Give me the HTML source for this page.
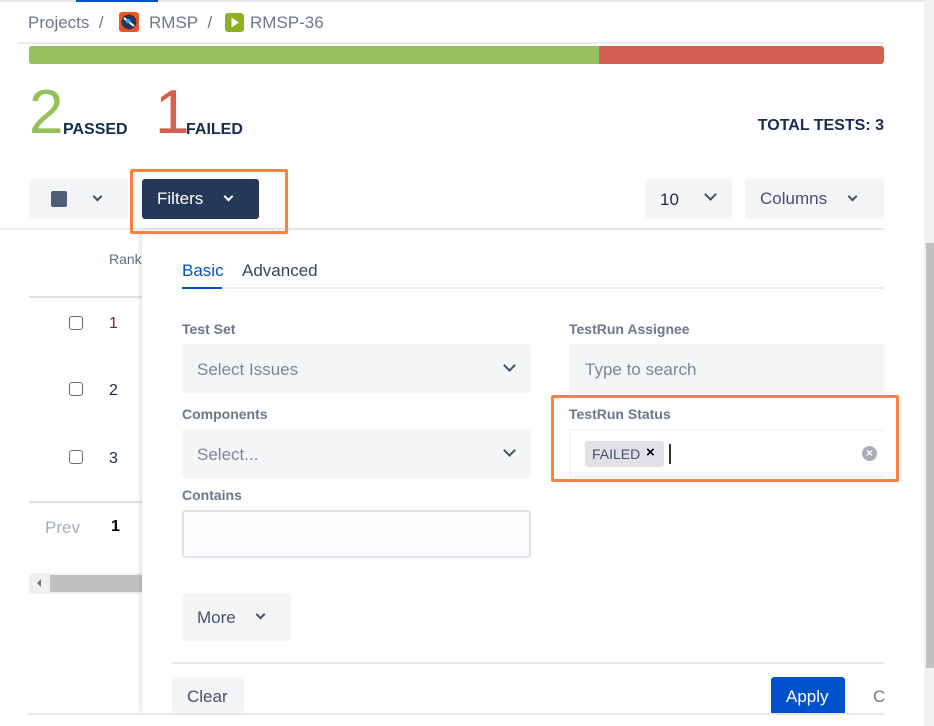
<!DOCTYPE html>
<html><head><meta charset="utf-8"><style>
*{box-sizing:border-box;margin:0;padding:0}
body{width:934px;height:726px;overflow:hidden;background:#fff;font-family:"Liberation Sans",sans-serif;position:relative;color:#172b4d}
.a{position:absolute}
.lbl{font-size:14px;font-weight:bold;color:#6b778c}
.sel{background:#f4f5f7;border-radius:3px}
.ph{font-size:17px;color:#7a869a}
.chev{position:absolute;width:9px;height:9px;border-right:2.5px solid #42526e;border-bottom:2.5px solid #42526e;transform:rotate(45deg)}
.cb{position:absolute;width:14px;height:14px;border:1.5px solid #6b6b6b;border-radius:3px;background:#fff}
.ob{z-index:5}
</style></head><body>
<div class="a" style="left:0;top:0;width:924px;height:2px;background:#e6e8ec"></div>
<div class="a" style="left:76px;top:0;width:82px;height:2px;background:#0052cc"></div>
<div class="a" style="left:924px;top:0;width:10px;height:726px;background:#f1f1f1"></div>
<div class="a" style="left:926px;top:243px;width:8px;height:425px;background:#c1c1c1"></div>

<div class="a" style="left:28px;top:13px;font-size:17px;color:#6b778c;white-space:nowrap">Projects&nbsp;&nbsp;/</div>
<svg class="a" style="left:119px;top:12px" width="20" height="20" viewBox="0 0 20 20"><rect width="20" height="20" rx="3" fill="#f4511e"/><circle cx="10" cy="10" r="7.5" fill="#253858"/><path d="M5 6 L15 14" stroke="#fff" stroke-width="2"/><circle cx="9" cy="9" r="2.2" fill="#29b6f6"/></svg>
<div class="a" style="left:149px;top:13px;font-size:17px;color:#6b778c;white-space:nowrap">RMSP&nbsp;&nbsp;/</div>
<svg class="a" style="left:225px;top:13px" width="19" height="19" viewBox="0 0 19 19"><rect width="19" height="19" rx="3" fill="#8eb021"/><path d="M6.5 4.5 L14 9.5 L6.5 14.5Z" fill="#fff"/></svg>
<div class="a" style="left:250px;top:13px;font-size:17px;color:#6b778c">RMSP-36</div>
<div class="a" style="left:18px;top:42px;width:866px;height:2px;background:#ebecf0"></div>

<div class="a" style="left:29px;top:46px;width:855px;height:18px;border-radius:3px;overflow:hidden;background:#d46050"><div style="width:570px;height:18px;background:#97c05c"></div></div>

<div class="a" style="left:29px;top:82px;font-size:62px;color:#97c05c;line-height:62px">2</div>
<div class="a" style="left:63px;top:121px;font-size:16px;font-weight:bold">PASSED</div>
<div class="a" style="left:155px;top:82px;font-size:62px;color:#d46050;line-height:62px">1</div>
<div class="a" style="left:186px;top:121px;font-size:16px;font-weight:bold">FAILED</div>
<div class="a" style="left:700px;top:117px;width:184px;text-align:right;font-size:16px;font-weight:bold">TOTAL TESTS: 3</div>

<div class="a sel" style="left:29px;top:179px;width:99px;height:40px"></div>
<div class="a" style="left:51px;top:191px;width:16px;height:16px;background:#505f79;border-radius:2px"></div>
<div class="chev" style="left:94px;top:193px;width:7px;height:7px;border-width:2px"></div>
<div class="a" style="left:142px;top:179px;width:117px;height:40px;background:#253858;border-radius:3px"></div>
<div class="a" style="left:157px;top:189px;font-size:17px;color:#fff">Filters</div>
<div class="chev" style="left:225px;top:193px;width:7px;height:7px;border-color:#fff;border-width:2px"></div>
<div class="a sel" style="left:645px;top:179px;width:87px;height:40px"></div>
<div class="a" style="left:660px;top:190px;font-size:17px">10</div>
<div class="chev" style="left:706px;top:190px"></div>
<div class="a sel" style="left:745px;top:179px;width:139px;height:40px"></div>
<div class="a" style="left:760px;top:189px;font-size:17px;color:#42526e">Columns</div>
<div class="chev" style="left:849px;top:193px;width:7px;height:7px;border-width:2px"></div>
<div class="a" style="left:0;top:228px;width:884px;height:2px;background:#ebecf0"></div>

<div class="a" style="left:109px;top:251px;font-size:14px;color:#5e6c84">Rank</div>
<div class="a" style="left:29px;top:296px;width:120px;height:2px;background:#dfe1e6"></div>
<div class="cb" style="left:69px;top:316px"></div><div class="a" style="left:109px;top:315px;font-size:16px;color:#7a1e2e">1</div>
<div class="cb" style="left:69px;top:382px"></div><div class="a" style="left:109px;top:382px;font-size:16px">2</div>
<div class="cb" style="left:69px;top:450px"></div><div class="a" style="left:109px;top:450px;font-size:16px">3</div>
<div class="a" style="left:29px;top:501px;width:120px;height:2px;background:#dfe1e6"></div>
<div class="a" style="left:45px;top:518px;font-size:17px;color:#a5adba">Prev</div>
<div class="a" style="left:111px;top:518px;font-size:16px;font-weight:bold;color:#000">1</div>
<div class="a" style="left:29px;top:573px;width:120px;height:21px;background:#f1f1f1"></div>
<div class="a" style="left:50px;top:575px;width:100px;height:17px;background:#c1c1c1"></div>
<div class="a" style="left:37px;top:579px;width:0;height:0;border-top:4px solid transparent;border-bottom:4px solid transparent;border-right:4px solid #777"></div>

<div class="a" style="left:142px;top:230px;width:742px;height:483px;background:#fff;box-shadow:-2px 0 4px rgba(9,30,66,.12)"></div>
<div class="a" style="left:182px;top:261px;font-size:17px;color:#0052cc">Basic</div>
<div class="a" style="left:242px;top:261px;font-size:17px;color:#344563">Advanced</div>
<div class="a" style="left:182px;top:287px;width:702px;height:2px;background:#ebecf0"></div>
<div class="a" style="left:182px;top:287px;width:40px;height:2px;background:#0052cc"></div>

<div class="a lbl" style="left:182px;top:321px">Test Set</div>
<div class="a sel" style="left:182px;top:344px;width:349px;height:49px"></div>
<div class="a ph" style="left:197px;top:360px">Select Issues</div>
<div class="chev" style="left:505px;top:361px"></div>

<div class="a lbl" style="left:182px;top:406px">Components</div>
<div class="a sel" style="left:182px;top:429px;width:349px;height:49px"></div>
<div class="a ph" style="left:197px;top:445px">Select...</div>
<div class="chev" style="left:505px;top:446px"></div>

<div class="a lbl" style="left:182px;top:487px">Contains</div>
<div class="a" style="left:182px;top:510px;width:349px;height:48px;background:#fafbfc;border:2px solid #dfe1e6;border-radius:3px"></div>

<div class="a sel" style="left:182px;top:593px;width:109px;height:48px"></div>
<div class="a" style="left:197px;top:608px;font-size:17px;color:#42526e">More</div>
<div class="chev" style="left:257px;top:611px;width:7px;height:7px;border-width:2px"></div>

<div class="a lbl" style="left:569px;top:321px">TestRun Assignee</div>
<div class="a sel" style="left:569px;top:344px;width:315px;height:49px"></div>
<div class="a ph" style="left:585px;top:360px">Type to search</div>

<div class="a lbl" style="left:569px;top:406px">TestRun Status</div>
<div class="a" style="left:569px;top:429px;width:315px;height:49px;border:2px solid #f4f5f7;border-right:none;border-radius:3px"></div>
<div class="a" style="left:585px;top:441px;width:79px;height:26px;background:#dfe1e6;border-radius:3px"></div>
<div class="a" style="left:592px;top:446px;font-size:14px;color:#42526e">FAILED</div>
<div class="a" style="left:646px;top:444px;font-size:15px;font-weight:bold;color:#000">×</div>
<div class="a" style="left:669px;top:444px;width:2px;height:20px;background:#333"></div>
<div class="a" style="left:862px;top:446px;width:15px;height:15px;border-radius:50%;background:#a5adba;color:#fff;font-size:12px;font-weight:bold;text-align:center;line-height:15px">×</div>

<div class="a" style="left:172px;top:662px;width:712px;height:2px;background:#e6e8ec"></div>
<div class="a sel" style="left:172px;top:677px;width:72px;height:36px"></div>
<div class="a" style="left:187px;top:687px;font-size:17px;color:#42526e">Clear</div>
<div class="a" style="left:771px;top:677px;width:74px;height:36px;background:#0052cc;border-radius:3px 3px 0 0"></div>
<div class="a" style="left:786px;top:687px;font-size:17px;color:#fff">Apply</div>
<div class="a" style="left:873px;top:687px;font-size:17px;color:#6b778c">C</div>
<div class="a" style="left:28px;top:713px;width:856px;height:2px;background:#e6e8ec"></div>

<div class="a ob" style="left:130px;top:169px;width:158px;height:65px;border:3px solid #ff8142;border-radius:2px"></div>
<div class="a ob" style="left:551px;top:395px;width:348px;height:87px;border:3px solid #ff8142;border-radius:2px"></div>
</body></html>
